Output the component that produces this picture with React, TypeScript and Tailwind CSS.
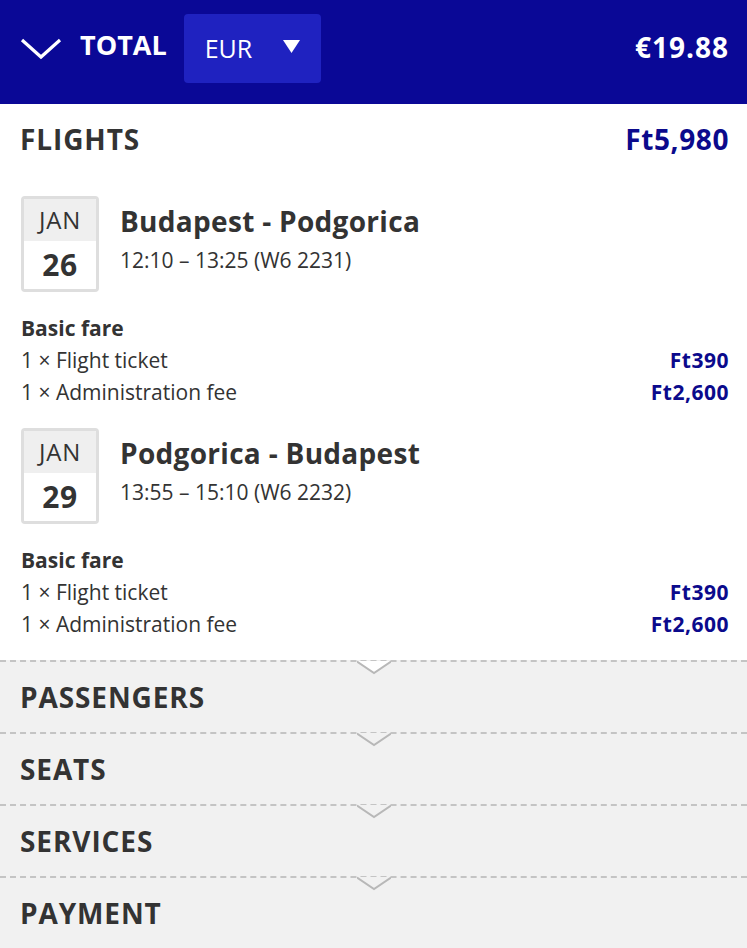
import React from 'react';

const font = { fontFamily: '"Open Sans", "Noto Sans", sans-serif' };

type Leg = { month: string; day: string; route: string; time: string };

const legs: Leg[] = [
  { month: 'JAN', day: '26', route: 'Budapest - Podgorica', time: '12:10 – 13:25 (W6 2231)' },
  { month: 'JAN', day: '29', route: 'Podgorica - Budapest', time: '13:55 – 15:10 (W6 2232)' },
];

const Notch = ({ fill }: { fill: string }) => (
  <svg className="absolute left-1/2 -translate-x-1/2 -top-[2px]" width="34" height="16" viewBox="0 0 34 16">
    <polygon points="0,1 17,13 34,1" fill={fill} />
    <polyline points="0,1.5 17,13 34,1.5" fill="none" stroke="#b8b8b8" strokeWidth="2" />
  </svg>
);

const FlightLeg = ({ leg }: { leg: Leg }) => (
  <div>
    <div className="flex items-start gap-[21px]">
      <div className="w-[78px] h-[96px] border-[3px] border-[#dedede] rounded-[4px] overflow-hidden flex flex-col shrink-0">
        <div className="h-[42px] bg-[#efefef] flex items-center justify-center text-[24px] tracking-[0.8px] text-[#333] leading-none">{leg.month}</div>
        <div className="flex-1 bg-white flex items-center justify-center text-[30px] tracking-[0.5px] font-bold text-[#333] leading-none">{leg.day}</div>
      </div>
      <div className="pt-[7px]">
        <div className="text-[28px] tracking-[0.3px] font-bold text-[#333] leading-[36px]">{leg.route}</div>
        <div className="text-[21px] text-[#333] leading-[30px] mt-[6px]">{leg.time}</div>
      </div>
    </div>
    <div className="mt-[20px] text-[21px] text-[#333] leading-[32px]">
      <div className="font-bold">Basic fare</div>
      <div className="flex justify-between">
        <span>1 × Flight ticket</span>
        <span className="font-bold text-[#0b0a8c] tracking-[0.5px]">Ft390</span>
      </div>
      <div className="flex justify-between">
        <span>1 × Administration fee</span>
        <span className="font-bold text-[#0b0a8c] tracking-[0.5px]">Ft2,600</span>
      </div>
    </div>
  </div>
);

const Section = ({ title, above }: { title: string; above: string }) => (
  <div className="relative h-[72px] bg-[#f1f1f1] border-t-2 border-dashed border-[#c4c4c4] flex items-center px-[20px]">
    <Notch fill={above} />
    <span className="text-[28px] tracking-[0.9px] font-bold text-[#333]">{title}</span>
  </div>
);

export default function App() {
  return (
    <div className="w-[747px] h-[948px] bg-white overflow-hidden" style={font}>
      <header className="h-[104px] bg-[#0a0896] pt-[14px] pl-[20px] pr-[18px]">
        <div className="h-[69px] flex items-center">
          <svg width="42" height="24" viewBox="0 0 42 24" className="mr-[18px]">
            <polyline points="2,3 21,20 40,3" fill="none" stroke="white" strokeWidth="3.2" />
          </svg>
          <span className="text-[27px] font-bold text-white mr-[17px] -mt-[6px]">TOTAL</span>
          <div className="w-[137px] h-[69px] bg-[#1f22c0] rounded-[4px] flex items-center pl-[21px] pr-[21px] justify-between">
            <span className="text-[25px] text-white">EUR</span>
            <svg width="17" height="13" viewBox="0 0 17 13" className="-mt-[5px]">
              <polygon points="0,0 17,0 8.5,13" fill="white" />
            </svg>
          </div>
          <span className="ml-auto text-[28px] tracking-[1px] font-bold text-white -mt-[4px]">€19.88</span>
        </div>
      </header>

      <div className="pl-[20px] pr-[18px] pb-[20px]">
        <div className="flex justify-between items-center h-[70px]">
          <span className="text-[28px] tracking-[0.9px] font-bold text-[#333]">FLIGHTS</span>
          <span className="text-[28px] tracking-[0.6px] font-bold text-[#0b0a8c]">Ft5,980</span>
        </div>
        <div className="pt-[22px] pl-[1px] space-y-[20px]">
          {legs.map(l => <FlightLeg key={l.day} leg={l} />)}
        </div>
      </div>

      <Section title="PASSENGERS" above="#ffffff" />
      <Section title="SEATS" above="#f1f1f1" />
      <Section title="SERVICES" above="#f1f1f1" />
      <Section title="PAYMENT" above="#f1f1f1" />
    </div>
  );
}
